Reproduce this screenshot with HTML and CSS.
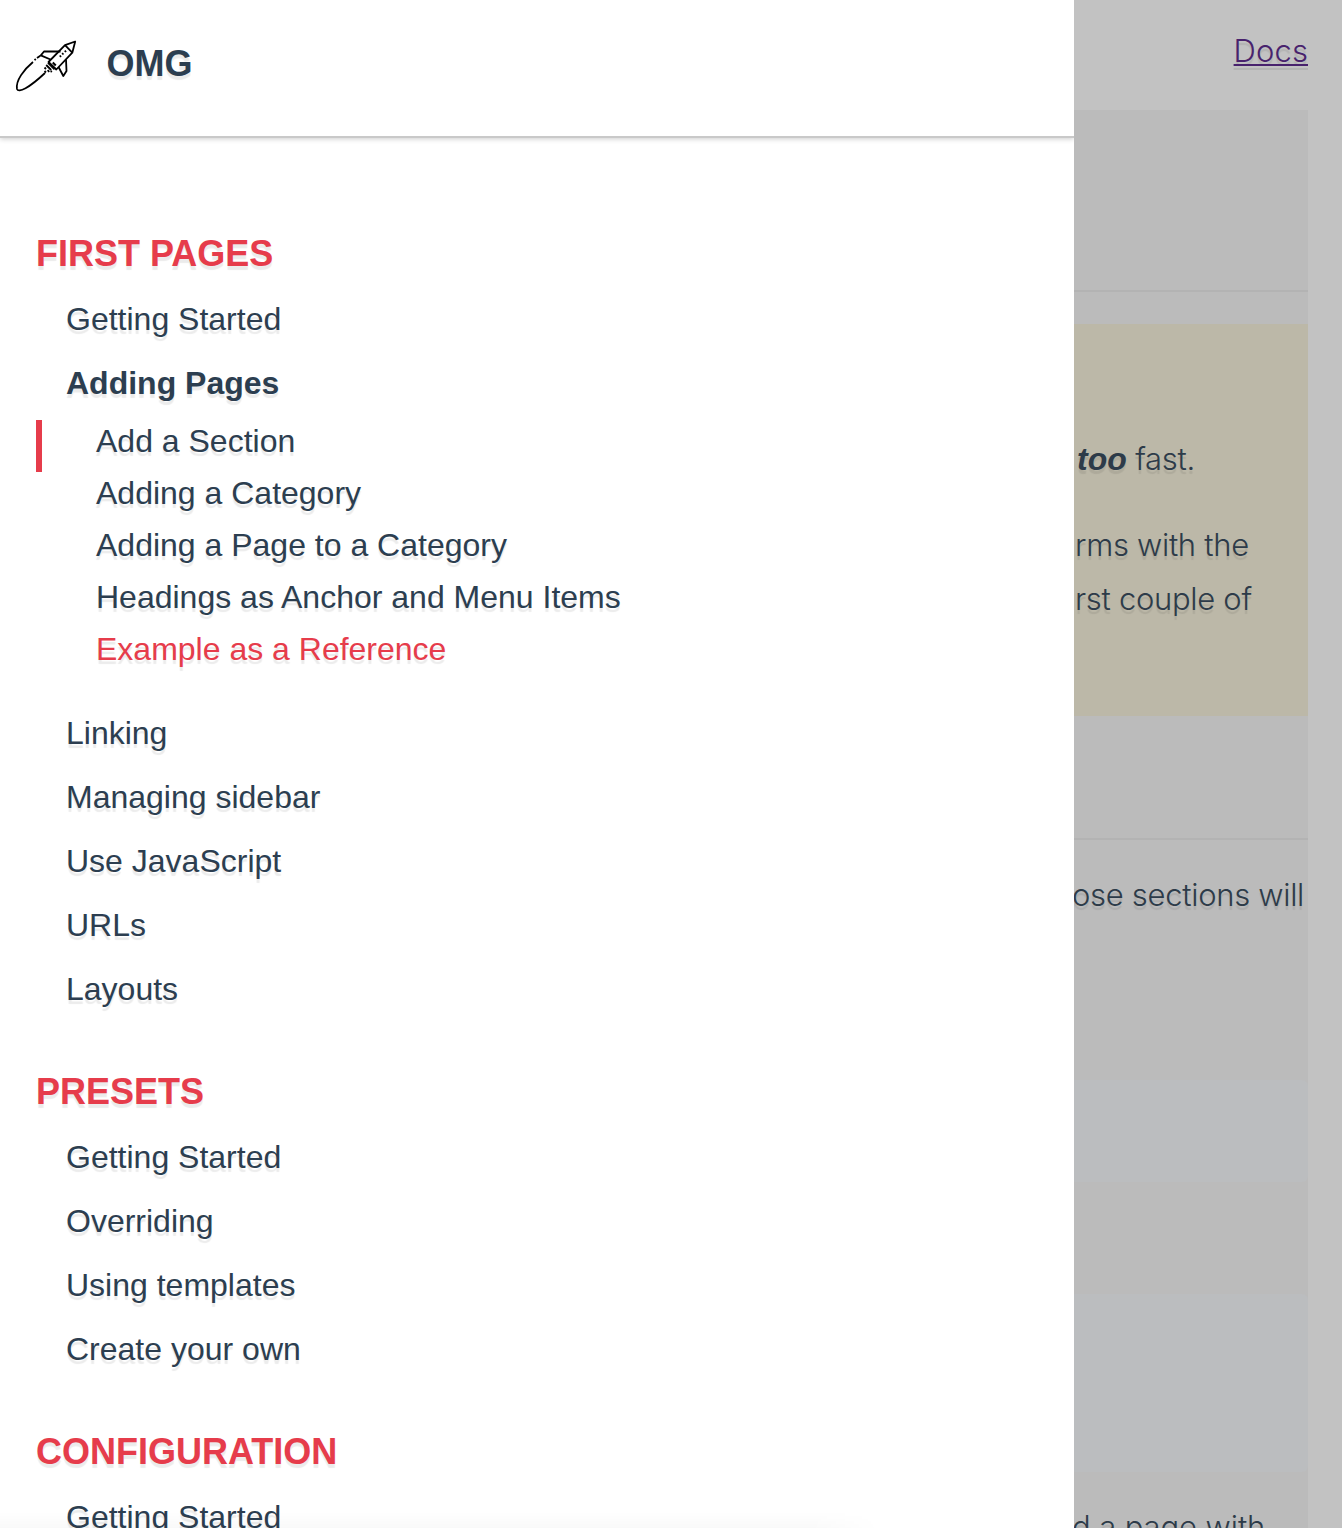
FILE: index.html
```html
<!DOCTYPE html>
<html lang="en">
<head>
<meta charset="utf-8">
<title>OMG</title>
<link rel="stylesheet" href="styles.css">
</head>
<body>
<div class="app">
  <aside class="sidebar">
    <header class="brand">
      <svg class="logo" viewBox="0 0 80 62" width="80" height="62" fill="none" stroke="#000" stroke-width="1.8" stroke-linejoin="round">
        <path d="M70.200 6.500L60 10.200L43.500 27L51.300 34.500L67.300 17.700Z"/>
        <path d="M60 10.200L67.300 17.700"/>
        <path d="M55.500 16.500L39 16.500L35.800 20.300L45.500 24.500M61 24.500L61.500 36L58.300 41L53.500 32"/>
        <path d="M54.800 21.800l1.200-1.200M57.200 19.400l1.200-1.200M59.800 16.900l1.200-1.200" stroke-width="2"/>
        <path d="M47.800 27.500l3 3" stroke-width="2"/>
        <path d="M43 27.800l6.500 6.500M41.200 30l5 5M39.500 32.500l1.500 1.500M42.600 35.200l1.700 1.700M45.800 36l1 1M39.500 36l1.500 1.500"/>
        <path d="M35.300 20.800l-3.300 2.300M30.800 24l-1.300 1.100"/>
        <path d="M28 27C19 34.500 10.500 45.500 12 54C13.500 58.300 24 53 40 38"/>
      </svg>
      <span class="name">OMG</span>
    </header>
    <nav class="menu">
      <section>
        <h2>First Pages</h2>
        <ul>
          <li>Getting Started</li>
          <li class="open">Adding Pages</li>
          <li class="nested">
            <ul class="anchors">
              <li class="marked">Add a Section</li>
              <li>Adding a Category</li>
              <li>Adding a Page to a Category</li>
              <li>Headings as Anchor and Menu Items</li>
              <li class="current">Example as a Reference</li>
            </ul>
          </li>
          <li>Linking</li>
          <li>Managing sidebar</li>
          <li>Use JavaScript</li>
          <li>URLs</li>
          <li>Layouts</li>
        </ul>
      </section>
      <section>
        <h2>Presets</h2>
        <ul>
          <li>Getting Started</li>
          <li>Overriding</li>
          <li>Using templates</li>
          <li>Create your own</li>
        </ul>
      </section>
      <section>
        <h2>Configuration</h2>
        <ul>
          <li>Getting Started</li>
        </ul>
      </section>
    </nav>
  </aside>
  <div class="page">
    <header class="topbar"><a class="docs">Docs</a></header>
    <main class="content">
      <div class="title"></div>
      <div class="notice">
        <p class="fast"><b>too</b> fast.</p>
        <p class="terms">rms with the<br>rst couple of</p>
      </div>
      <div class="heading"></div>
      <p class="intro">ose sections will</p>
      <div class="code short"></div>
      <div class="code tall"></div>
      <p class="outro">d a page with</p>
    </main>
  </div>
</div>
</body>
</html>
```
FILE: styles.css
```css
* { box-sizing: border-box; margin: 0; padding: 0; }
body {
  height: 1528px;
  overflow: hidden;
  font: 32px/64px "Liberation Sans", Arial, sans-serif;
  color: #2c3e50;
  text-shadow: 0 4px 1px rgba(0, 0, 0, .08);
}
ul { list-style: none; }
.app { display: grid; grid-template-columns: 1074px 268px; height: 1528px; }

.sidebar { position: relative; background: #fff; overflow: hidden; }
.sidebar::after {
  content: "";
  position: absolute;
  inset: auto 194px 0 0;
  height: 16px;
  background: linear-gradient(rgba(0, 0, 0, 0), rgba(0, 0, 0, .025));
  -webkit-mask-image: linear-gradient(to right, #000 92%, transparent);
  mask-image: linear-gradient(to right, #000 92%, transparent);
}
.brand {
  display: flex;
  align-items: flex-start;
  height: 138px;
  padding: 35px 0 0 5px;
  border-bottom: 2px solid #c9c9c9;
  box-shadow: 0 1px 5px rgba(0, 0, 0, .2);
}
.name { margin-left: 21.5px; font-size: 36px; font-weight: bold; line-height: 58px; }
.menu { display: flex; flex-direction: column; gap: 39px; padding: 84px 0 0 36px; }
.menu h2 {
  height: 65px;
  color: #e63c4b;
  font-size: 36px;
  line-height: 64px;
  text-transform: uppercase;
}
.menu li { padding-left: 30px; }
.menu .open { font-weight: bold; }
.menu .nested { padding: 5px 0 21px; }
.anchors li { height: 52px; padding: 0 0 10px 60px; line-height: 42px; }
.anchors .marked { padding-left: 54px; border-left: 6px solid #e63c4b; }
.anchors .current { color: #e63c4b; }

.page {
  overflow: hidden;
  padding-right: 34px;
  background: #c2c2c2;
  color: #2d3b49;
  font-family: Inter, "Liberation Sans", sans-serif;
  font-size: 31px;
  font-weight: 300;
  letter-spacing: -.3px;
  white-space: nowrap;
}
.topbar { display: flex; justify-content: flex-end; height: 110px; padding-top: 19px; }
.docs {
  color: #48226d;
  letter-spacing: .1px;
  text-decoration: underline;
  text-decoration-thickness: 2px;
  text-underline-offset: 2px;
  text-decoration-skip-ink: none;
}
.content { height: 1418px; background: #bbb; }
.title { height: 182px; border-bottom: 2px solid #b3b3b3; }
.notice { height: 392px; margin-top: 32px; padding: 108px 0 0 3px; background: #bcb8a8; }
.notice p { line-height: 54px; }
.notice b { font-family: "Liberation Sans", sans-serif; font-size: 32px; font-style: italic; font-weight: bold; letter-spacing: 0; }
.notice .terms { margin-top: 32px; margin-left: -2px; }
.heading { height: 124px; border-bottom: 2px solid #b3b3b3; }
.intro { height: 240px; padding-top: 28px; line-height: 54px; margin-left: -2px; }
.code { border-radius: 0 6px 6px 0; background: #bbbdbf; }
.short { height: 102px; }
.tall { height: 178px; margin-top: 112px; }
.outro { margin: 28px 0 0 -2px; line-height: 54px; letter-spacing: -.1px; }
```
